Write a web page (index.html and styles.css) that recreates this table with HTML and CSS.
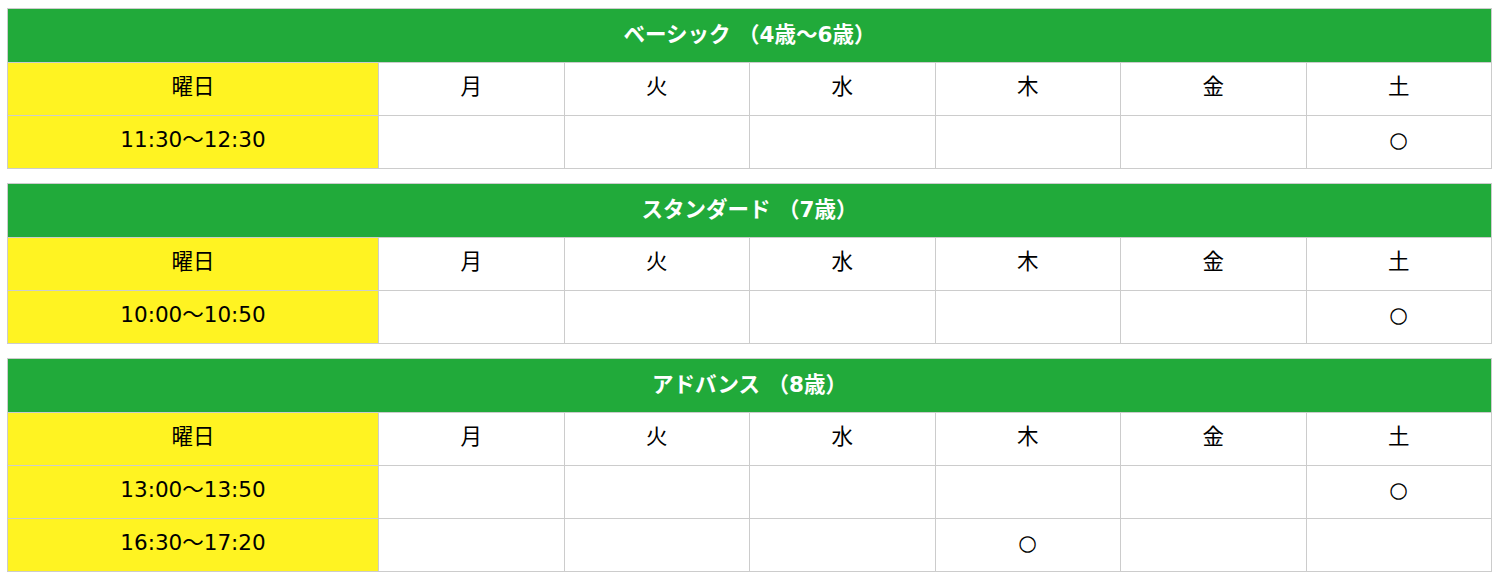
FILE: index.html
```html
<!DOCTYPE html>
<html lang="ja">
<head>
<meta charset="utf-8">
<title>スケジュール</title>
<link rel="stylesheet" href="styles.css">
</head>
<body>
<div class="wrap">
  <table class="sched">
    <colgroup><col class="c-label"><col><col><col><col><col><col></colgroup>
    <thead>
      <tr><th colspan="7" class="title">ベーシック （4歳～6歳）</th></tr>
    </thead>
    <tbody>
      <tr><td class="label">曜日</td><td>月</td><td>火</td><td>水</td><td>木</td><td>金</td><td>土</td></tr>
      <tr><td class="label">11:30～12:30</td><td></td><td></td><td></td><td></td><td></td><td>○</td></tr>
    </tbody>
  </table>
  <table class="sched">
    <colgroup><col class="c-label"><col><col><col><col><col><col></colgroup>
    <thead>
      <tr><th colspan="7" class="title">スタンダード （7歳）</th></tr>
    </thead>
    <tbody>
      <tr><td class="label">曜日</td><td>月</td><td>火</td><td>水</td><td>木</td><td>金</td><td>土</td></tr>
      <tr><td class="label">10:00～10:50</td><td></td><td></td><td></td><td></td><td></td><td>○</td></tr>
    </tbody>
  </table>
  <table class="sched">
    <colgroup><col class="c-label"><col><col><col><col><col><col></colgroup>
    <thead>
      <tr><th colspan="7" class="title">アドバンス （8歳）</th></tr>
    </thead>
    <tbody>
      <tr><td class="label">曜日</td><td>月</td><td>火</td><td>水</td><td>木</td><td>金</td><td>土</td></tr>
      <tr><td class="label">13:00～13:50</td><td></td><td></td><td></td><td></td><td></td><td>○</td></tr>
      <tr><td class="label">16:30～17:20</td><td></td><td></td><td></td><td>○</td><td></td><td></td></tr>
    </tbody>
  </table>
</div>
</body>
</html>
```
FILE: styles.css
```css
html, body {
  margin: 0;
  padding: 0;
  background: #fff;
}
body {
  font-family: "DejaVu Sans", "Noto Sans CJK JP", sans-serif;
  color: #000;
}
.wrap {
  padding: 8px 0 0 7px;
  width: 1485px;
}
.sched {
  width: 100%;
  border-collapse: collapse;
  table-layout: fixed;
  margin-bottom: 14px;
}
.sched col {
  width: 12.5%;
}
.sched col.c-label {
  width: 25%;
}
.sched th,
.sched td {
  border: 1px solid #cccccc;
  text-align: center;
  vertical-align: middle;
  font-size: 21.5px;
  line-height: 1.2;
  padding: 0 0 5px;
}
.sched td {
  height: 47px;
}
.sched th.title {
  background: #21aa3a;
  color: #fff;
  font-weight: bold;
  height: 52px;
  padding: 0 0 1px;
}
.sched td.label {
  background: #fff322;
}
```
